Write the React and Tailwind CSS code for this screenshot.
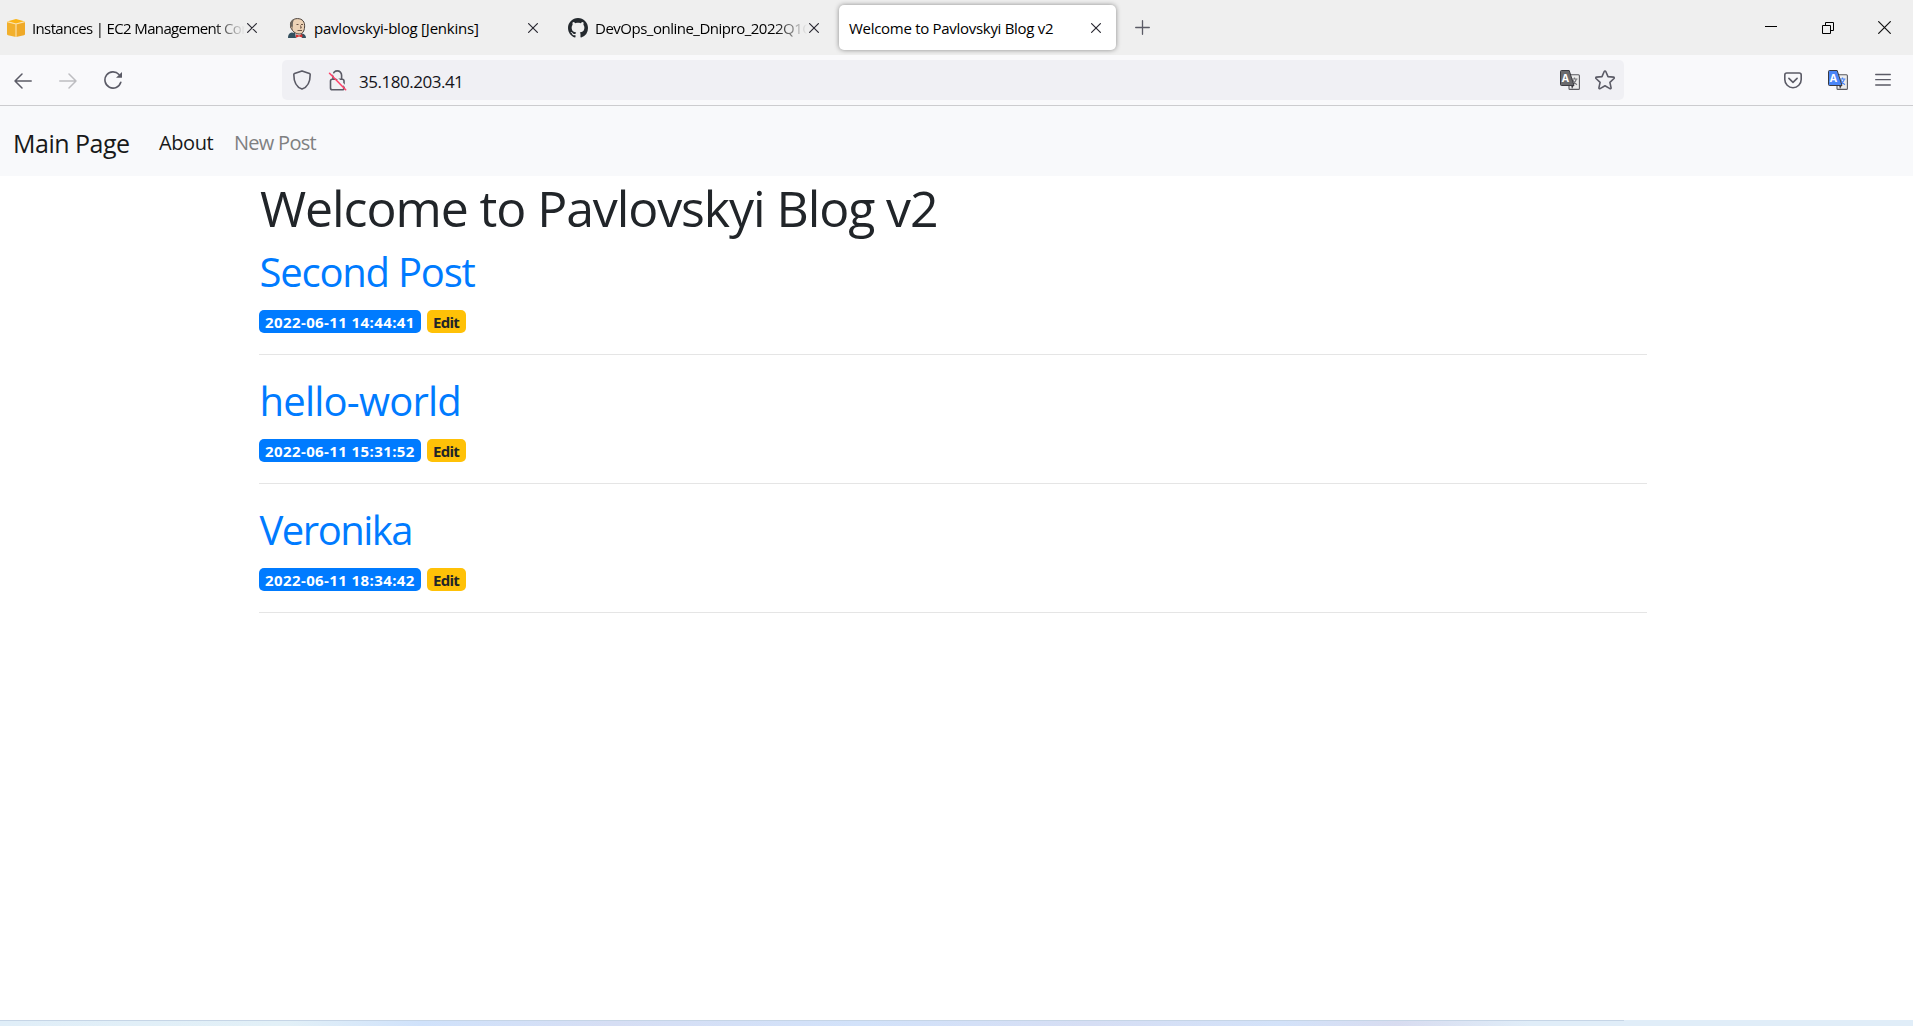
import React from "react";

function CubeIcon() {
  return (
    <svg width="18" height="18" viewBox="0 0 18 18" className="shrink-0">
      <path d="M0 2.600 9 5v13L1 16.300 0 15.500z" fill="#f2b02c" />
      <path d="M18 2.600 9 5v13l8-1.700 1-.8z" fill="#efa928" />
      <path d="M0 2.400 9 0l9 2.400L9 5z" fill="#fbb416" />
      <path d="M0 2.600 9 5l9-2.400M9 5v13" stroke="#fbe3b0" strokeWidth="1.1" fill="none" />
    </svg>
  );
}

function ButlerIcon() {
  return (
    <svg width="18" height="20" viewBox="0 0 18 20" className="shrink-0">
      <path d="M0 20c0-3 .8-5 3.500-5.600L8 15l6 .5c2.500.4 4 2 4 4.500z" fill="#33505f" />
      <path d="M7 14.500 12 14l2 6H8z" fill="#eee" />
      <path d="M2.500 8C2 3.500 5 .6 9.500.6 14.500.6 17 4 16.600 9c-.3 4-2 7-5.300 7C7.500 16 3.500 13 2.500 8z" fill="#ecd2b6" stroke="#4b403a" strokeWidth="1" />
      <path d="M2.500 9.500C1.300 5.500 3 1.500 6.500 1 5 3 4.800 5 4.900 7.500L4.500 12z" fill="#6d665f" />
      <path d="M4 8.300c-1.300-.3-1.500 2.500.6 3" fill="#efd3b4" stroke="#5a4438" strokeWidth=".6" />
      <path d="M8.500 6.500h2M13 6.500h2M12.500 7.500l.8 2.500h-1.300M9.500 12.500h4.500" stroke="#5a4438" strokeWidth=".9" fill="none" />
      <path d="M7.800 16.200 11 17.500l3.200-1.500.3 3.600L11 18.500l-3 1.300z" fill="#d8332f" />
    </svg>
  );
}

function GithubMark() {
  return (
    <svg width="20" height="20" viewBox="0 0 16 16" className="shrink-0" fill="#24292e">
      <path d="M8 0C3.580 0 0 3.580 0 8c0 3.540 2.290 6.530 5.470 7.590.4.07.55-.17.55-.38 0-.19-.01-.82-.01-1.490-2.010.37-2.530-.49-2.690-.94-.09-.23-.48-.94-.82-1.130-.28-.15-.68-.52-.01-.53.63-.01 1.080.58 1.230.82.72 1.210 1.870.87 2.330.66.07-.52.28-.87.51-1.070-1.780-.2-3.640-.89-3.640-3.950 0-.87.31-1.590.82-2.150-.08-.2-.36-1.020.08-2.120 0 0 .67-.21 2.200.82.64-.18 1.320-.27 2-.27.68 0 1.360.09 2 .27 1.530-1.040 2.200-.82 2.200-.82.44 1.100.16 1.920.08 2.120.51.56.82 1.270.82 2.150 0 3.070-1.870 3.750-3.650 3.950.29.25.54.73.54 1.480 0 1.070-.01 1.930-.01 2.200 0 .21.15.46.55.38A8.013 8.013 0 0016 8c0-4.420-3.580-8-8-8z" />
    </svg>
  );
}

function CloseIcon() {
  return (
    <svg width="10" height="10" viewBox="0 0 10 10" className="shrink-0" fill="none" stroke="#2b2a33" strokeWidth="1.2" strokeLinecap="round">
      <path d="M.6.6l8.800 8.800M9.400.6.6 9.400" />
    </svg>
  );
}

function ArrowIcon({ className }) {
  return (
    <svg width="18" height="16" viewBox="0 0 18 16" className={className} fill="none" stroke="currentColor" strokeWidth="1.5" strokeLinecap="round" strokeLinejoin="round">
      <path d="M17.200 8H1M8 1 1 8l7 7" />
    </svg>
  );
}

function ReloadIcon() {
  return (
    <svg width="18" height="18" viewBox="0 0 18 18" className="ml-[27px] shrink-0" fill="none" stroke="#5b5b66" strokeWidth="1.600" strokeLinecap="round">
      <path d="M16.800 11.300A8.100 8.100 0 1 1 15 3.500" />
      <path d="M18 .9v5.400a.5.5 0 0 1-.5.5h-5.500z" fill="#5b5b66" stroke="none" />
    </svg>
  );
}

function ShieldIcon() {
  return (
    <svg width="18" height="20" viewBox="0 0 18 20" className="shrink-0" fill="none" stroke="#5b5b66" strokeWidth="1.600" strokeLinejoin="round">
      <path d="M9 .9 16.500 3.500c.5.2.7.500.7.9C17.200 10.500 16 16.500 9 19.100 2 16.500.8 10.500.8 4.400c0-.4.2-.7.7-.9z" />
    </svg>
  );
}

function BrokenLockIcon() {
  return (
    <svg width="19" height="21" viewBox="0 0 19 21" className="ml-[17px] shrink-0" fill="none" strokeLinecap="round">
      <rect x="2.500" y="9.300" width="13.500" height="10.400" rx="1.800" stroke="#5b5b66" strokeWidth="1.600" />
      <path d="M5 9V5.200a4.300 4.300 0 0 1 8.600 0V9" stroke="#5b5b66" strokeWidth="1.600" />
      <path d="M3.200 2.200 19 18" stroke="#f0f0f4" strokeWidth="1.600" />
      <path d="M1.500 3.200 17.700 19.800" stroke="#ff4068" strokeWidth="1.500" />
    </svg>
  );
}

function TranslateIcon({ front, glyph, className }) {
  return (
    <svg width="20" height="20" viewBox="0 0 20 20" className={className}>
      <rect x="9" y="4.700" width="10.400" height="14.700" rx="1" fill="#ececec" stroke="#5a5a5f" strokeWidth="1.100" />
      <path d="M11.500 9h6M14.500 7.500V9M16.300 9c-.5 2.500-2 4.500-4.500 5.800M12.800 10c.7 2 2 3.600 4.200 4.800" stroke={glyph} strokeWidth="1.200" fill="none" />
      <path d="M11 15h3l-2 4z" fill="#3b3b40" />
      <path d="M1.500.5h7.700L14 15.500H1.500a1 1 0 0 1-1-1v-13a1 1 0 0 1 1-1z" fill={front} stroke="#3a3a40" strokeWidth="1" strokeLinejoin="round" />
      <text x="1.800" y="11.800" fontSize="10.500" fontWeight="700" fontFamily="Open Sans, sans-serif" fill="#fff">A</text>
    </svg>
  );
}

function StarIcon() {
  return (
    <svg width="20" height="20" viewBox="0 0 20 20" className="ml-[15px] shrink-0" fill="none" stroke="#5b5b66" strokeWidth="1.600" strokeLinejoin="round">
      <path d="M9.200 1.500a.9.9 0 0 1 1.600 0L13 6.600l5.500.5c.8.1 1 .9.500 1.400l-4.100 3.800 1.200 5.500c.1.700-.6 1.200-1.200.8L10 15.800l-4.900 2.800c-.6.4-1.300-.1-1.200-.8l1.200-5.500L1 8.500c-.5-.5-.3-1.300.5-1.400L7 6.600z" />
    </svg>
  );
}

function PocketIcon() {
  return (
    <svg width="18" height="17" viewBox="0 0 18 17" className="shrink-0" fill="none" stroke="#5b5b66" strokeWidth="1.600" strokeLinecap="round" strokeLinejoin="round">
      <path d="M2.800 1h12.400c1.200 0 2 .8 2 2v4.500a8.200 8.200 0 0 1-16.400 0V3c0-1.200.8-2 2-2z" />
      <path d="M4.900 6.400 9 10.300l4.100-3.900" />
    </svg>
  );
}

function MenuIcon() {
  return (
    <svg width="16" height="14" viewBox="0 0 16 14" className="ml-[27px] shrink-0" stroke="#5b5b66" strokeWidth="1.300" strokeLinecap="round">
      <path d="M.7 1.500h14.600M.7 6.700h14.600M.7 12h14.600" />
    </svg>
  );
}

function WindowControls() {
  return (
    <div className="ml-auto flex items-center pr-[22px]">
      <svg width="12" height="13" viewBox="0 0 12 13" stroke="#000"><path d="M0 5.500h12" /></svg>
      <svg width="12" height="12" viewBox="0 0 12 12" className="ml-[45px]" fill="none" stroke="#000">
        <path d="M.5 3.500h8v8h-8zM3.500 3.500v-3h8v8h-3" />
      </svg>
      <svg width="13" height="13" viewBox="0 0 13 13" className="ml-11" stroke="#111" strokeWidth="1.200">
        <path d="M.3.3l12.400 12.400M12.700.3.3 12.700" />
      </svg>
    </div>
  );
}

const tabs = [
  { title: "Instances | EC2 Management Console", icon: <CubeIcon />, style: "ml-[7px] tracking-[-0.636px]", fade: true },
  { title: "pavlovskyi-blog [Jenkins]", icon: <ButlerIcon />, style: "tracking-[-0.211px]" },
  { title: "DevOps_online_Dnipro_2022Q1Q2", icon: <GithubMark />, style: "tracking-[-0.494px]", fade: true },
];

function TabStrip() {
  return (
    <div className="flex h-[55px] items-center overflow-hidden bg-[#efefef] text-[15px] text-black">
      {tabs.map((tab, i) => (
        <div key={tab.title} className={`flex h-full shrink-0 items-center ${i === 0 ? "w-[278px] pl-[7px]" : "w-[281px] pl-[10px]"} pr-[21px]`}>
          <div className="flex h-5 w-[18px] shrink-0 items-center justify-center overflow-visible">{tab.icon}</div>
          <div className={`min-w-0 flex-1 overflow-hidden pt-px whitespace-nowrap ${tab.style} ${i === 0 ? "" : "ml-[8px]"} ${tab.fade ? "mr-[2px] [mask-image:linear-gradient(to_right,#000_calc(100%-32px),transparent)]" : "mr-[2px]"}`}>
            {tab.title}
          </div>
          <CloseIcon />
        </div>
      ))}
      <div className="ml-[-1px] flex h-[45px] w-[277px] shrink-0 items-center justify-between rounded-[5px] bg-white pr-[15px] pl-[10px] shadow-[0_0_5px_rgba(0,0,0,0.42)]">
        <span className="pt-px tracking-[-0.291px] whitespace-nowrap">Welcome to Pavlovskyi Blog v2</span>
        <CloseIcon />
      </div>
      <svg width="15" height="15" viewBox="0 0 15 15" className="ml-[19px] shrink-0" stroke="#5b5b66" strokeWidth="1.300" strokeLinecap="round">
        <path d="M7.500.7v13.600M.7 7.500h13.600" />
      </svg>
      <WindowControls />
    </div>
  );
}

function Toolbar() {
  return (
    <div className="flex h-[51px] items-center border-b border-[#cccccf] bg-[#f9f9fb] pl-[14px]">
      <ArrowIcon className="mt-px shrink-0 text-[#5b5b66]" />
      <ArrowIcon className="mt-px ml-[27px] shrink-0 rotate-180 text-[#bdbdc1]" />
      <ReloadIcon />
      <div className="ml-40 flex h-10 w-[1342px] items-center rounded-[5px] bg-[#f0f0f4] pr-[9px] pl-[11px]">
        <ShieldIcon />
        <BrokenLockIcon />
        <span className="ml-[12px] pt-[3px] text-[17px] tracking-[-0.48px] text-[#15141a]">35.180.203.41</span>
        <TranslateIcon front="#6a6a6d" glyph="#77777b" className="ml-auto shrink-0" />
        <StarIcon />
      </div>
      <div className="ml-auto flex items-center pr-[22px]">
        <PocketIcon />
        <TranslateIcon front="#4a86f7" glyph="#4a86f7" className="ml-[26px] shrink-0" />
        <MenuIcon />
      </div>
    </div>
  );
}

const posts = [
  { title: "Second Post", date: "2022-06-11 14:44:41", tracking: "tracking-[-1.22px]" },
  { title: "hello-world", date: "2022-06-11 15:31:52", tracking: "tracking-[-0.78px]" },
  { title: "Veronika", date: "2022-06-11 18:34:42", tracking: "tracking-[-1.5px]" },
];

function Post({ post }) {
  return (
    <article className="mb-5 flex h-[109px] flex-col border-b border-[#e5e5e5]">
      <h2 className={`h-[49px] pt-[2px] pl-[0.5px] text-[40px] leading-[48px] text-[#007bff] ${post.tracking}`}>{post.title}</h2>
      <div className="mt-[15px] flex gap-[6px] text-[15px] leading-[23px] font-bold">
        <span className="h-[23px] w-[162px] rounded-[5px] bg-[#007bff] pt-px pl-[6px] tracking-[0.4px] whitespace-nowrap text-white">{post.date}</span>
        <span className="h-[23px] w-[39px] rounded-[5px] bg-[#ffc107] pt-px pl-[6px] tracking-[-0.7px] text-[#212529]">Edit</span>
      </div>
    </article>
  );
}

export default function App() {
  return (
    <div className="flex h-screen flex-col overflow-hidden bg-white font-['Open_Sans',sans-serif]">
      <TabStrip />
      <Toolbar />
      <nav className="flex h-[70px] shrink-0 items-center bg-[#f8f9fb] pt-[3px] pl-[13px] text-xl leading-8">
        <a className="w-[146px] text-[25px] leading-7 tracking-[-0.5px] text-[#18191a]">Main Page</a>
        <a className="w-[75px] tracking-[-0.42px] text-[#18191a]">About</a>
        <a className="tracking-[-0.725px] text-[#7f8081]">New Post</a>
      </nav>
      <main className="ml-[259px] w-[1388px] flex-1">
        <h1 className="h-[70px] pt-[2px] pl-px text-[50px] leading-[60px] tracking-[-1.09px] text-[#212529]">Welcome to Pavlovskyi Blog v2</h1>
        {posts.map((post) => <Post key={post.title} post={post} />)}
      </main>
      <footer className="h-[6px] shrink-0 bg-[linear-gradient(90deg,#e0eef8_0%,#e2f0f7_15%,#d0e2fb_22%,#d6def4_32%,#d2e2fa_45%,#d6def4_57%,#d3e2f9_67%,#d8dcf0_73%,#e0edf8_80%,#e0edf8_100%)]">
        <div className="h-px w-[1624px] bg-[#c6d5e6]" />
      </footer>
    </div>
  );
}
